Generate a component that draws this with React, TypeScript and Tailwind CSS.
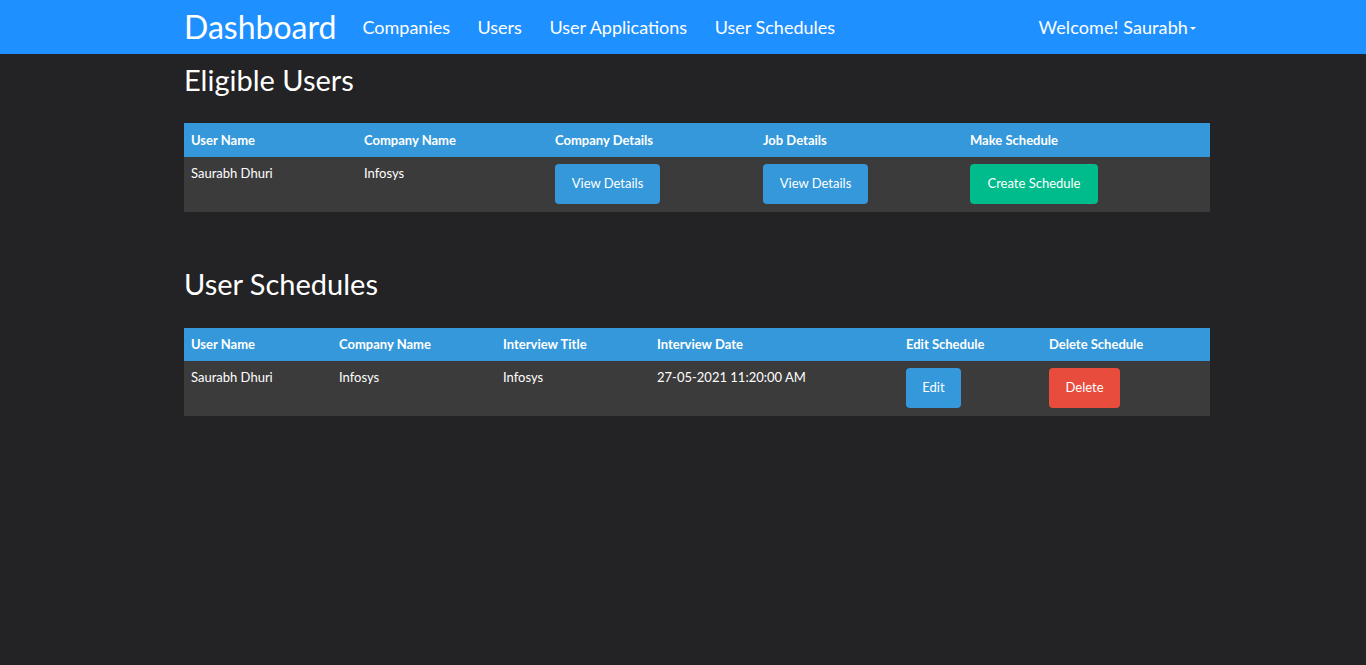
const navLinks = ["Companies", "Users", "User Applications", "User Schedules"]

function Btn({ label, color, w }: { label: string; color: string; w: string }) {
    return (
        <button className={`${color} ${w} h-[40px] rounded-[4px] text-[13px] text-white`} type="button">
            {label}
        </button>
    )
}

export default function App() {
    return (
        <div className="min-h-[665px] bg-[#232224] font-['Lato','Liberation_Sans',sans-serif] text-white">
            <nav className="h-[54px] bg-[#1e90ff]">
                <div className="ml-[184px] flex h-full w-[1012px] items-center">
                    <span className="mr-[26px] text-[32px] leading-none">Dashboard</span>
                    <ul className="flex gap-[27.5px] text-[18px]">
                        {navLinks.map((l) => (
                            <li key={l}>{l}</li>
                        ))}
                    </ul>
                    <div className="ml-auto flex items-center text-[18px] tracking-[0.1px]">
                        Welcome! Saurabh
                        <span className="ml-[2px] mt-[2px] border-x-[3px] border-t-[3px] border-x-transparent border-t-white" />
                    </div>
                </div>
            </nav>

            <main className="ml-[184px] w-[1026px]">
                <h1 className="pt-[10px] text-[29px] leading-[32px]">Eligible Users</h1>
                <table className="mt-[27px] w-full table-fixed border-collapse text-[13px]">
                    <colgroup>
                        <col className="w-[173px]" />
                        <col className="w-[191px]" />
                        <col className="w-[208px]" />
                        <col className="w-[207px]" />
                        <col />
                    </colgroup>
                    <thead>
                        <tr className="h-[34px] bg-[#3498db] text-left font-extrabold">
                            <th className="px-[7px] pt-[2px]">User Name</th>
                            <th className="px-[7px] pt-[2px]">Company Name</th>
                            <th className="px-[7px] pt-[2px]">Company Details</th>
                            <th className="px-[7px] pt-[2px]">Job Details</th>
                            <th className="px-[7px] pt-[2px]">Make Schedule</th>
                        </tr>
                    </thead>
                    <tbody>
                        <tr className="bg-[#3b3b3b] align-top">
                            <td className="px-[7px] pt-[7px]">Saurabh Dhuri</td>
                            <td className="px-[7px] pt-[7px]">Infosys</td>
                            <td className="px-[7px] pb-[8px] pt-[7px]">
                                <Btn label="View Details" color="bg-[#3498db]" w="w-[105px]" />
                            </td>
                            <td className="px-[7px] pb-[8px] pt-[7px]">
                                <Btn label="View Details" color="bg-[#3498db]" w="w-[105px]" />
                            </td>
                            <td className="px-[7px] pb-[8px] pt-[7px]">
                                <Btn label="Create Schedule" color="bg-[#00bc8c]" w="w-[128px]" />
                            </td>
                        </tr>
                    </tbody>
                </table>

                <h1 className="mt-[56px] text-[29px] leading-[32px]">User Schedules</h1>
                <table className="mt-[28px] w-full table-fixed border-collapse text-[13px]">
                    <colgroup>
                        <col className="w-[148px]" />
                        <col className="w-[164px]" />
                        <col className="w-[154px]" />
                        <col className="w-[249px]" />
                        <col className="w-[143px]" />
                        <col />
                    </colgroup>
                    <thead>
                        <tr className="h-[33px] bg-[#3498db] text-left font-extrabold">
                            <th className="px-[7px]">User Name</th>
                            <th className="px-[7px]">Company Name</th>
                            <th className="px-[7px]">Interview Title</th>
                            <th className="px-[7px]">Interview Date</th>
                            <th className="px-[7px]">Edit Schedule</th>
                            <th className="px-[7px]">Delete Schedule</th>
                        </tr>
                    </thead>
                    <tbody>
                        <tr className="bg-[#3b3b3b] align-top">
                            <td className="px-[7px] pt-[7px]">Saurabh Dhuri</td>
                            <td className="px-[7px] pt-[7px]">Infosys</td>
                            <td className="px-[7px] pt-[7px]">Infosys</td>
                            <td className="px-[7px] pt-[7px]">27-05-2021 11:20:00 AM</td>
                            <td className="px-[7px] pb-[7px] pt-[7px]">
                                <Btn label="Edit" color="bg-[#3498db]" w="w-[55px]" />
                            </td>
                            <td className="px-[7px] pb-[8px] pt-[7px]">
                                <Btn label="Delete" color="bg-[#e74c3c]" w="w-[71px]" />
                            </td>
                        </tr>
                    </tbody>
                </table>
            </main>
        </div>
    )
}
